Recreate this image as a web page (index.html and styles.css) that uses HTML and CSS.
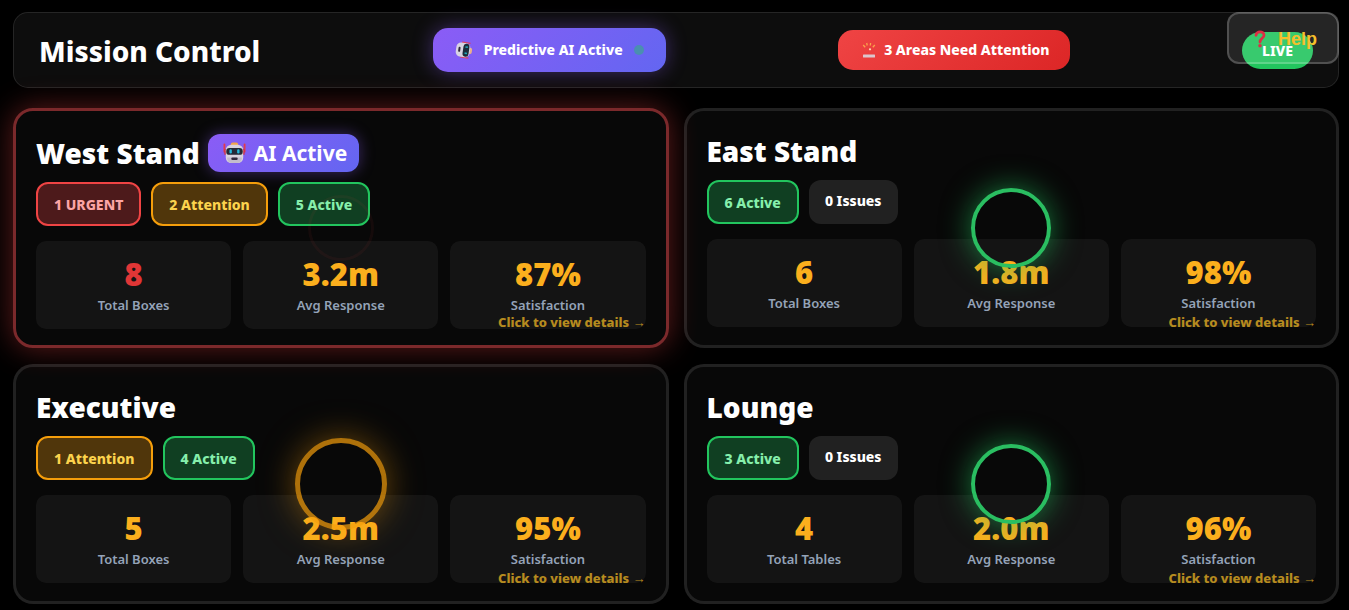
FILE: index.html
```html
<!DOCTYPE html>
<html lang="en">
<head>
<meta charset="utf-8">
<meta name="viewport" content="width=device-width, initial-scale=1">
<title>Mission Control</title>
<link rel="stylesheet" href="styles.css">
</head>
<body>
<svg class="defs" width="0" height="0" aria-hidden="true">
  <symbol id="robot" viewBox="0 0 24 24">
    <path d="M1 2.500v8M23 2.500v8" stroke="#e23b4c" stroke-width="2" stroke-linecap="round"/>
    <path d="M1 8h3v6H1zM20 8h3v6h-3z" fill="#c92f49"/>
    <rect x="8" y="0.500" width="8" height="5" rx="2" fill="#f2a54a"/>
    <rect x="2.500" y="3" width="19" height="20" rx="6" fill="#d9d3df"/>
    <path d="M4 17h16v1a5 5 0 0 1-5 5H9a5 5 0 0 1-5-5z" fill="#c3bccb"/>
    <rect x="3" y="6.500" width="18" height="7.500" rx="3.500" fill="#252a38"/>
    <rect x="6.500" y="8" width="2.600" height="4.500" rx="1.300" fill="#26b9dc"/>
    <rect x="14.900" y="8" width="2.600" height="4.500" rx="1.300" fill="#26b9dc"/>
    <rect x="8.500" y="17" width="7" height="2.600" rx="1.300" fill="#33293d"/>
  </symbol>
</svg>
<main class="page">
  <header class="topbar">
    <h1 class="brand">Mission Control</h1>
    <div class="ai-status">
      <svg class="robot-small" aria-hidden="true" viewBox="0 0 18 18">
        <g transform="rotate(8 9 9)">
          <path d="M6 1.500h8.500M6 16.500h8.500" stroke="#dc4060" stroke-width="1.200"/>
          <rect x="13" y="6" width="4" height="6" rx="1.500" fill="#eab08a"/>
          <rect x="1" y="2" width="14" height="14" rx="4.500" fill="#d8d3e2"/>
          <rect x="8" y="2.500" width="6" height="13" rx="3" fill="#1c2b3b"/>
          <path d="M10 5.800h2.500M10 12h2.500" stroke="#22a5b8" stroke-width="1.600"/>
          <rect x="3.300" y="6.500" width="2" height="5" rx="1" fill="#30283c"/>
        </g>
      </svg>
      <span>Predictive AI Active</span>
      <span class="ai-dot"></span>
    </div>
    <div class="alert-status">
      <svg class="siren" aria-hidden="true" viewBox="0 0 14 16">
        <path d="M1.200 3l2 2.300M12.800 3l-2 2.300M4.700 1l.5 2.500M8.600 1l-.3 2.500" stroke="#f9a34c" stroke-width="1.300"/>
        <circle cx="8" cy="7.300" r="1.100" fill="#ffd8b4"/>
        <rect x="1" y="12.500" width="12" height="3" rx=".5" fill="#dcc5cc"/>
      </svg>
      <span>3 Areas Need Attention</span>
    </div>
    <div class="live">LIVE</div>
  </header>

  <section class="areas">
    <article class="card card-urgent">
      <h2 class="card-title">West Stand
        <span class="ai-badge"><svg class="robot" aria-hidden="true"><use href="#robot"/></svg>AI Active</span>
      </h2>
      <div class="chips">
        <span class="chip chip-red">1 URGENT</span>
        <span class="chip chip-amber">2 Attention</span>
        <span class="chip chip-green">5 Active</span>
      </div>
      <div class="stats">
        <div class="stat"><strong class="value value-red">8</strong><span class="label">Total Boxes</span></div>
        <div class="stat"><strong class="value">3.2m</strong><span class="label">Avg Response</span></div>
        <div class="stat"><strong class="value">87%</strong><span class="label">Satisfaction</span></div>
      </div>
      <span class="ring ring-red"></span>
      <a class="more" href="#west">Click to view details →</a>
    </article>

    <article class="card">
      <h2 class="card-title">East Stand</h2>
      <div class="chips">
        <span class="chip chip-green">6 Active</span>
        <span class="chip">0 Issues</span>
      </div>
      <div class="stats">
        <div class="stat"><strong class="value">6</strong><span class="label">Total Boxes</span></div>
        <div class="stat"><strong class="value">1.8m</strong><span class="label">Avg Response</span></div>
        <div class="stat"><strong class="value">98%</strong><span class="label">Satisfaction</span></div>
      </div>
      <span class="ring ring-green"></span>
      <a class="more" href="#east">Click to view details →</a>
    </article>

    <article class="card">
      <h2 class="card-title">Executive</h2>
      <div class="chips">
        <span class="chip chip-amber">1 Attention</span>
        <span class="chip chip-green">4 Active</span>
      </div>
      <div class="stats">
        <div class="stat"><strong class="value">5</strong><span class="label">Total Boxes</span></div>
        <div class="stat"><strong class="value">2.5m</strong><span class="label">Avg Response</span></div>
        <div class="stat"><strong class="value">95%</strong><span class="label">Satisfaction</span></div>
      </div>
      <span class="ring ring-amber"></span>
      <a class="more" href="#executive">Click to view details →</a>
    </article>

    <article class="card">
      <h2 class="card-title">Lounge</h2>
      <div class="chips">
        <span class="chip chip-green">3 Active</span>
        <span class="chip">0 Issues</span>
      </div>
      <div class="stats">
        <div class="stat"><strong class="value">4</strong><span class="label">Total Tables</span></div>
        <div class="stat"><strong class="value">2.0m</strong><span class="label">Avg Response</span></div>
        <div class="stat"><strong class="value">96%</strong><span class="label">Satisfaction</span></div>
      </div>
      <span class="ring ring-green"></span>
      <a class="more" href="#lounge">Click to view details →</a>
    </article>
  </section>
</main>
<button class="help" type="button">
  <svg class="question" aria-hidden="true" viewBox="0 0 12 18">
    <path d="M2 5.300C2 .8 10 .8 10 5.200c0 3-4 3.300-4 6.800" fill="none" stroke="#dd2e44" stroke-width="2.800" stroke-linecap="round"/>
    <circle cx="6" cy="15.800" r="1.800" fill="#dd2e44"/>
  </svg>
  Help
</button>
</body>
</html>
```
FILE: styles.css
```css
* { box-sizing: border-box; }

body {
  margin: 0;
  background: #000;
  color: #fff;
  font-family: "Noto Sans", "Open Sans", sans-serif;
  font-size: 14px;
  line-height: 20px;
}

.defs { position: absolute; }

.page {
  display: flex;
  flex-direction: column;
  gap: 20px;
  padding: 12px 10px 5px 13px;
}

.topbar {
  display: flex;
  align-items: center;
  justify-content: space-between;
  padding: 15px 25px;
  border: 1px solid rgba(255, 255, 255, 0.1);
  border-radius: 15px;
  background: rgba(255, 255, 255, 0.05);
}

.brand {
  margin: 0;
  padding-top: 2px;
  font-size: 28px;
  line-height: 40px;
  font-weight: 800;
}

.ai-status,
.alert-status {
  display: flex;
  align-items: center;
  font-weight: 800;
}

.ai-status {
  gap: 11px;
  padding: 12px 22px;
  border-radius: 15px;
  background: linear-gradient(135deg, #8b5cf6, #6366f1);
  box-shadow: 0 0 20px rgba(139, 92, 246, 0.4);
}

.robot-small { width: 18px; height: 18px; }

.ai-dot {
  width: 10px;
  height: 10px;
  border-radius: 50%;
  background: #4a8fb0;
}

.alert-status {
  gap: 8px;
  padding: 10px 20px 10px 24px;
  border-radius: 15px;
  background: linear-gradient(135deg, #ef4444, #dc2626);
}

.siren { width: 14px; height: 16px; }

.live {
  padding: 9px 20px 8px;
  border-radius: 20px;
  background: #22c55e;
  font-weight: 800;
}

.areas {
  display: grid;
  grid-template-columns: repeat(2, minmax(0, 1fr));
  grid-auto-rows: 1fr;
  gap: 16px 15px;
}

.card {
  position: relative;
  padding: 20px 20px 16px;
  border: 3px solid rgba(255, 255, 255, 0.1);
  border-radius: 20px;
  background: rgba(255, 255, 255, 0.03);
}

.card-urgent {
  border-color: #7b292b;
  box-shadow: 0 0 30px rgba(239, 68, 68, 0.4);
}

.card-title {
  display: flex;
  align-items: center;
  gap: 8px;
  margin: 0 0 10px;
  min-height: 39px;
  font-size: 28px;
  line-height: 38px;
  font-weight: 900;
}

.card-urgent .card-title { min-height: 41px; padding-top: 3px; }

.ai-badge {
  display: inline-flex;
  align-items: center;
  gap: 8px;
  padding: 0 12px 0 15px;
  border-radius: 12px;
  background: linear-gradient(135deg, #8b5cf6, #6366f1);
  box-shadow: 0 0 15px rgba(139, 92, 246, 0.4);
  font-size: 21px;
  font-weight: 700;
}

.robot { width: 23px; height: 22px; }

.chips {
  display: flex;
  gap: 10px;
  margin-bottom: 15px;
  min-height: 44px;
}

.chip {
  padding: 11px 16px 9px;
  border-radius: 12px;
  background: rgba(255, 255, 255, 0.1);
  font-weight: 800;
}

.chip-red,
.chip-amber,
.chip-green { border: 2px solid; }

.chip-red { border-color: #ef4444; background: #4d1a1b; color: #fca5a5; }
.chip-amber { border-color: #f59e0b; background: #50360b; color: #fcd34d; }
.chip-green { border-color: #22c55e; background: #103f22; color: #86efac; }

.stats {
  display: grid;
  grid-template-columns: repeat(3, minmax(0, 1fr));
  gap: 12px;
}

.stat {
  display: flex;
  flex-direction: column;
  align-items: center;
  padding: 12px 12px 14px;
  border-radius: 10px;
  background: rgba(255, 255, 255, 0.05);
}

.value {
  color: #fbaf1d;
  font-size: 31px;
  line-height: 42px;
  font-weight: 900;
}

.value-red { color: #e03636; }

.label {
  color: #94a3b8;
  font-size: 13px;
  font-weight: 600;
}

.ring {
  position: absolute;
  top: 50%;
  left: 50%;
  width: 80px;
  height: 80px;
  border: 4px solid;
  border-radius: 50%;
  transform: translate(-50%, -50%);
  pointer-events: none;
}

.ring-green {
  border-color: #2abe61;
  box-shadow: 0 0 30px rgba(34, 197, 94, 0.6);
}

.ring-amber {
  width: 92px;
  height: 92px;
  border-width: 5px;
  border-color: #f59e0b;
  box-shadow: 0 0 34px rgba(245, 158, 11, 0.6);
  opacity: 0.7;
}

.ring-red {
  width: 66px;
  height: 66px;
  border-width: 3px;
  border-color: #ef4444;
  opacity: 0.06;
}

.more {
  position: absolute;
  right: 20px;
  bottom: 13px;
  color: #fbbf24;
  font-size: 13px;
  line-height: 20px;
  font-weight: 800;
  text-decoration: none;
  opacity: 0.7;
}

.help {
  position: absolute;
  top: 12px;
  right: 10px;
  display: flex;
  align-items: center;
  gap: 12px;
  padding: 14px 20px 12px 25px;
  border: 2px solid rgba(255, 255, 255, 0.2);
  border-radius: 12px;
  background: rgba(255, 255, 255, 0.1);
  color: #f5bf2b;
  font: 600 18px/22px "Liberation Sans", sans-serif;
}

.question { width: 12px; height: 18px; }
```
